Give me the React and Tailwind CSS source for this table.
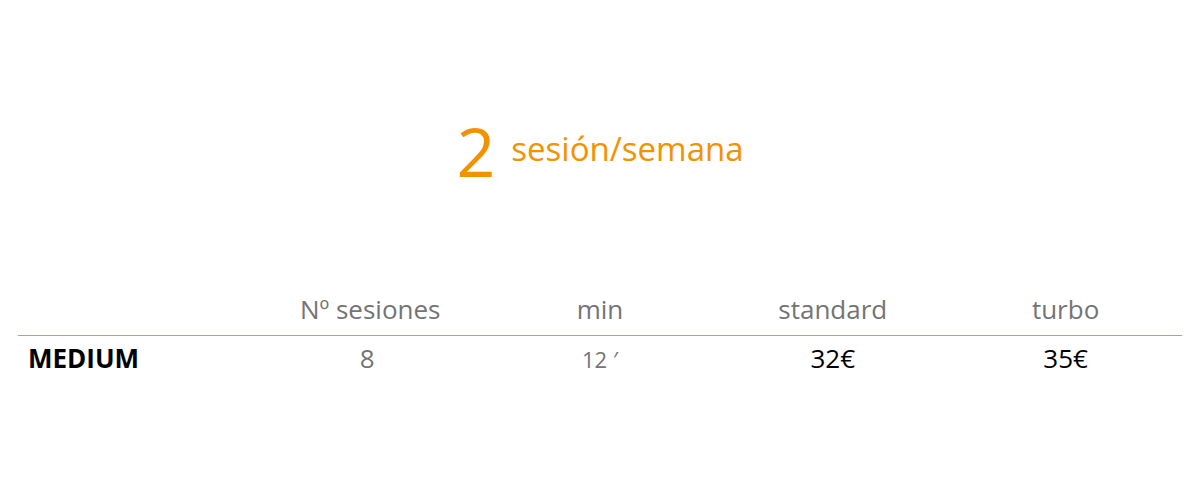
import React from 'react';

const rows = [
    { name: 'MEDIUM', sessions: '8', min: '12', standard: '32€', turbo: '35€' },
];

function App() {
    return (
        <div className="w-[1200px] h-[480px] bg-white font-['Open_Sans',sans-serif]">
            <div className="pt-[117px] flex items-start justify-center text-[#f39200]">
                <span className="text-[68px] leading-none">2</span>
                <span className="ml-[16px] mt-[15px] text-[33px] leading-none">sesión/semana</span>
            </div>

            <div className="mx-[18px] mt-[111px]">
                <div className="grid grid-cols-5 text-[26px] text-[#747474] leading-none pb-[13px] border-b border-[#dc9a3c]">
                    <div></div>
                    <div className="text-center pl-[6px]">Nº sesiones</div>
                    <div className="text-center">min</div>
                    <div className="text-center">standard</div>
                    <div className="text-center">turbo</div>
                </div>
                {rows.map((row, i) => (
                    <div key={i} className="grid grid-cols-5 items-baseline pt-[9px] text-[26px] leading-none">
                        <div className="pl-[10px] font-bold text-black">{row.name}</div>
                        <div className="text-center text-[#747474]">{row.sessions}</div>
                        <div className="text-center text-[#747474] text-[22px]">{row.min} ′</div>
                        <div className="text-center text-black">{row.standard}</div>
                        <div className="text-center text-black">{row.turbo}</div>
                    </div>
                ))}
            </div>
        </div>
    );
}

export default App;
